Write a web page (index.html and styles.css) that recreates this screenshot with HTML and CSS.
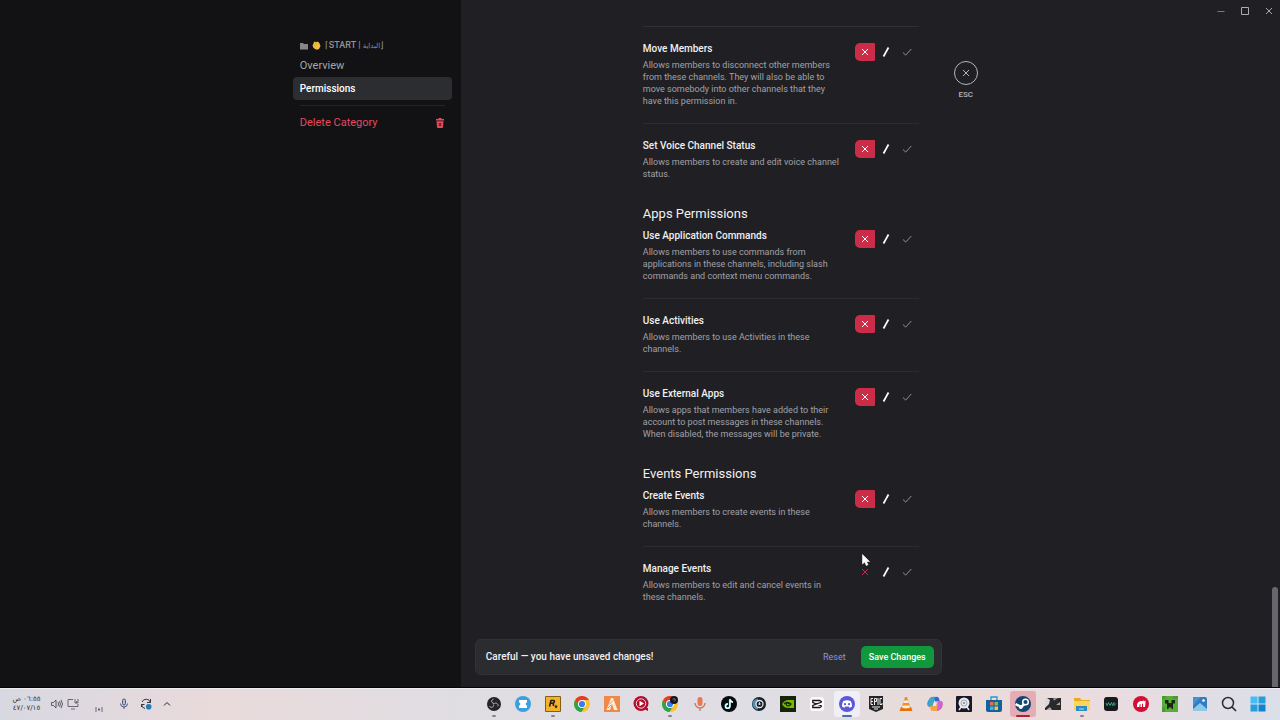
FILE: index.html
```html
<!DOCTYPE html>
<html lang="en">
<head>
<meta charset="utf-8">
<title>Category Permissions</title>
<link rel="stylesheet" href="styles.css">
<script src="app.js" defer></script>
</head>
<body>
<svg class="defs" aria-hidden="true">
  <symbol id="x" viewBox="0 0 8 8"><path d="M1 1l6 6M7 1L1 7" fill="none" stroke="currentColor"/></symbol>
  <symbol id="slash" viewBox="0 0 8 10"><path d="M1.5 9.5L6.5 .5" fill="none" stroke="currentColor" stroke-width="1.7"/></symbol>
  <symbol id="check" viewBox="0 0 10 8"><path d="M1 4.5l2.7 2.6L9.3 1" fill="none" stroke="currentColor"/></symbol>
  <symbol id="chrome" viewBox="0 0 16 16">
    <circle cx="8" cy="8" r="8" fill="#f8c22c"/>
    <path d="M1.1 4A8 8 0 0 1 15 4H8L4.5 10z" fill="#e33b2e"/>
    <path d="M1.1 4A8 8 0 0 0 7.3 16L11.4 10 4.6 10z" fill="#2ba24c"/>
    <circle cx="8" cy="8" r="4" fill="#fff"/><circle cx="8" cy="8" r="3.1" fill="#3b7de8"/>
  </symbol>
</svg>

<div class="app">
  <aside class="sidebar">
    <nav class="nav" aria-label="Category settings">
      <h2 class="nav-title">
        <svg width="8" height="8" viewBox="0 0 8 8"><path d="M0 1h3l1 1h4v5.500H0z" fill="#85858b"/></svg>
        <svg width="9" height="9" viewBox="0 0 9 9"><path d="M2 1l1-.6 1 1 1-1 1 .7 1 .4.7 1.500L8.500 5 7 8 4.500 8.700 1.500 7 .5 4.500 1.300 3z" fill="#f0bd42"/><path d="M3 2l2 2M1.800 3.800l2 2" stroke="#c98a26" stroke-width=".5"/></svg>
        <span>⌈START | <bdi lang="ar">البداية</bdi>⌋</span>
      </h2>
      <a class="nav-item" href="#overview">Overview</a>
      <a class="nav-item active" href="#permissions" aria-current="page">Permissions</a>
      <hr class="nav-line">
      <button class="nav-item danger" type="button">Delete Category
        <svg width="10" height="10" viewBox="0 0 10 10"><path d="M3.500 0h3v1H9v1.500H1V1h2.500zM1.500 3.300h7L8 9a1 1 0 0 1-1 1H3a1 1 0 0 1-1-1z" fill="currentColor"/><path d="M3.800 5l2.400 3M6.200 5L3.800 8" stroke="#17171a" stroke-width=".8"/></svg>
      </button>
    </nav>
  </aside>

  <main class="main">
    <div class="window-buttons">
      <button class="minimize" type="button" aria-label="Minimize"><svg width="8" height="8" viewBox="0 0 8 8"><path d="M.5 4.500h7" stroke="currentColor"/></svg></button>
      <button type="button" aria-label="Maximize"><svg width="8" height="8" viewBox="0 0 8 8"><path d="M.5 .5h7v7h-7z" fill="none" stroke="currentColor"/></svg></button>
      <button type="button" aria-label="Close window"><svg width="8" height="8"><use href="#x"/></svg></button>
    </div>

    <div class="page">
      <form class="permissions" id="permissions">
        <section class="group" data-items="voice"></section>
        <section class="group" data-items="apps"><h2 class="group-title">Apps Permissions</h2></section>
        <section class="group" data-items="events"><h2 class="group-title">Events Permissions</h2></section>
      </form>
      <div class="escape">
        <button class="escape-button" type="button" aria-label="Close settings"><svg width="8" height="8"><use href="#x"/></svg></button>
        <span>ESC</span>
      </div>
    </div>

    <div class="notice">
      <p>Careful — you have unsaved changes!</p>
      <button class="reset" type="reset" form="permissions">Reset</button>
      <button class="save" type="submit" form="permissions">Save Changes</button>
    </div>
    <div class="scroll-thumb"></div>
    <svg class="cursor" width="8" height="12" viewBox="0 0 8 12" aria-hidden="true"><path d="M.5 .5v9.500l2.200-2 1.600 3.500 1.700-.8L4.500 7.500h3z" fill="#fff" stroke="#fff" stroke-width=".6"/></svg>
  </main>
</div>

<footer class="taskbar">
  <div class="tray">
    <time class="clock" lang="ar"><span>٠٦:٥٥ ص</span><span dir="ltr">٤٧/٠٧/١٥</span></time>
    <svg class="sound" width="12" height="12" viewBox="0 0 12 12" fill="none" stroke="#3a3c48" stroke-width=".8"><path d="M.5 4.500h2L5 2v8L2.500 7.500h-2zM7 4q1 2 0 4M8.500 3q2 3 0 6M10 1.800q3 4.200 0 8.400"/></svg>
    <svg class="screen" width="12" height="12" viewBox="0 0 12 12" fill="none" stroke="#4b4d59" stroke-width=".8"><path d="M6 1.500H1v7h10V6M4 11h4M8 1v4h3V1M9.500 3v2"/></svg>
    <svg class="signal" width="8" height="8" viewBox="0 0 8 8" fill="none" stroke="#4b4d59" stroke-width=".8"><path d="M1 2v5M7 2v5M4 3v3M3 4.500h2"/></svg>
    <svg class="mic" width="10" height="12" viewBox="0 0 10 12" fill="none" stroke="#48567b"><rect x="3.500" y="1" width="3" height="6" rx="1.500" fill="#b9bfd3"/><path d="M1.500 5.500a3.500 3.500 0 0 0 7 0M5 9v2"/></svg>
    <svg class="update" width="12" height="12" viewBox="0 0 12 12" fill="none" stroke="#333540"><path d="M10.500 4.500A4.500 4.500 0 0 0 2 4M10.500 1v3.500H7M1.500 6.500A4.500 4.500 0 0 0 5 10.500M1.500 9V6.500h3"/><circle cx="8.700" cy="8.700" r="2.800" fill="#247eb6" stroke="none"/></svg>
    <svg class="more" width="8" height="8" viewBox="0 0 8 8" fill="none" stroke="#25252c"><path d="M1 5.500l3-3 3 3"/></svg>
  </div>
  <div class="dock">
    <button class="dot" type="button" aria-label="OBS"><svg viewBox="0 0 16 16"><circle cx="8" cy="8" r="7" fill="#242326"/><g fill="none" stroke="#c4c4c9" stroke-width=".9"><path d="M8 7.500C5 7 5 3.500 7.500 3.200M8.300 7.700c2-1.700 4.500.5 3.600 2.700M7.500 8.500c.6 3-2.500 3.800-4 1.700"/></g></svg></button>
    <button type="button" aria-label="Timer"><svg viewBox="0 0 16 16"><circle cx="8" cy="8" r="8" fill="#3ba0df"/><path d="M4 4h8v2L10.500 8 12 10v2H4v-2L5.500 8 4 6z" fill="#fff"/></svg></button>
    <button class="dot" type="button" aria-label="Rockstar Games"><svg viewBox="0 0 16 16"><rect width="16" height="16" rx="1" fill="#806016"/><rect x="1" y="1" width="14" height="14" fill="#f3b229"/><path d="M4.500 10.500L6 4.500h2.500q2 .3 0 2.800H6M8.300 7.500l.2 2.500" fill="none" stroke="#251e14" stroke-width="1.600"/><path d="M11 8.500l.5 1.300 1.400.1-1 .9.300 1.400-1.200-.8-1.200.8.400-1.400-1.100-.9 1.400-.1z" fill="#251e14"/></svg></button>
    <button type="button" aria-label="Chrome"><svg><use href="#chrome"/></svg></button>
    <button type="button" aria-label="FiveM"><svg viewBox="0 0 16 16"><rect width="16" height="16" fill="#ef8948"/><path d="M7 2h2l4.500 12H10L8 7.500 6 14H2.500z" fill="#fff0df"/><path d="M5 8.500l4-4M4 12l3-3" stroke="#ef8948"/></svg></button>
    <button type="button" aria-label="Video player"><svg viewBox="0 0 16 16"><circle cx="8" cy="7.500" r="7.500" fill="#b30d2e"/><path d="M10 12h5v3l-2-1z" fill="#b30d2e"/><circle cx="8" cy="7.500" r="4.700" fill="#b30d2e" stroke="#f3dbe0"/><path d="M6.500 4.800v5.400L11 7.500z" fill="#fff"/></svg></button>
    <button class="dot" type="button" aria-label="Chrome profile"><svg viewBox="0 0 16 16"><use href="#chrome" width="16" height="16"/><circle cx="12" cy="4" r="4" fill="#17171b"/><path d="M10.500 3.500l2-1 1 1.500-1.500 1.500" fill="none" stroke="#999" stroke-width=".8"/></svg></button>
    <button type="button" aria-label="Voice recorder"><svg viewBox="0 0 16 16"><rect x="5.500" y="1" width="5" height="9" rx="2.500" fill="#e9774f"/><path d="M3 7a5 5 0 0 0 10 0M8 12v3" fill="none" stroke="#c77562" stroke-width="1.300"/></svg></button>
    <button type="button" aria-label="TikTok"><svg viewBox="0 0 16 16"><circle cx="8" cy="8" r="8" fill="#08090c"/><path d="M8.700 3v7.200a2.200 2.200 0 1 1-2-2.400M8.700 3q.5 2.700 3 3" fill="none" stroke="#27d2d5" stroke-width="1.700"/><path d="M9 3.400v7a2.200 2.200 0 1 1-2-2.400M9 3.400q.5 2.500 3 2.800" fill="none" stroke="#fff" stroke-width="1.400"/></svg></button>
    <button type="button" aria-label="Launcher"><svg viewBox="0 0 16 16"><circle cx="8" cy="8" r="7" fill="#18212a"/><path d="M7 2.500v11A5.500 5.500 0 0 1 7 2.500" fill="#4b91b7"/><circle cx="8.500" cy="8" r="3.500" fill="#17181d" stroke="#e8e8ed" stroke-width="1.300"/><path d="M8.500 6v3M7 8h3" stroke="#eee" stroke-width=".8"/></svg></button>
    <button type="button" aria-label="NVIDIA"><svg viewBox="0 0 16 16"><rect width="16" height="16" fill="#17230d"/><path d="M2 8q3-4 6-4h6v8H8q-4 0-6-4" fill="#75b900"/><path d="M4 8q3-3.500 7 0-3.500 4-5 0 1.500-2 3 0" fill="none" stroke="#17230d" stroke-width="1.200"/></svg></button>
    <button type="button" aria-label="CapCut"><svg viewBox="0 0 16 16"><rect x="1" y="1" width="14" height="14" rx="3" fill="#faf9fa"/><path d="M12.800 6L10.800 4.500H3.800V6.500l9 3.500M12.800 10L10.800 11.500H3.800V9.500l9-3.500" fill="none" stroke="#16161a" stroke-width="1.300"/></svg></button>
    <button class="current" type="button" aria-label="Discord"><svg viewBox="0 0 16 16"><circle cx="8" cy="8" r="8" fill="#5b58dc"/><path d="M4.300 5Q8 3.500 11.700 5q1.600 3 1.300 5.800l-2.500 1L9.700 10.500H6.300l-.8 1.300-2.500-1Q2.700 8 4.300 5" fill="#fff"/><circle cx="6" cy="8.200" r="1.100" fill="#5b58dc"/><circle cx="10" cy="8.200" r="1.100" fill="#5b58dc"/></svg></button>
    <button type="button" aria-label="Epic Games"><svg viewBox="0 0 16 16"><path d="M1 0h14v13l-7 3-7-3z" fill="#242427"/><path d="M5 2.500H3v6h2M3 5.500h2M6.500 9V2.500h2v3h-2M10 2v7M14 2.500h-2v6h2V7M4 11h8M6 13h4" fill="none" stroke="#eee"/></svg></button>
    <button type="button" aria-label="VLC"><svg viewBox="0 0 16 16"><path d="M3 11h10l1.500 4h-13z" fill="#e5700c"/><path d="M7 1h2l3.500 11q-4.500 2-9 0z" fill="#f28e22"/><path d="M6 4.500h4l.8 2.500H5.200zM4.500 9.500h7l.6 2q-4 1.500-8.200 0z" fill="#f1ece9"/></svg></button>
    <button type="button" aria-label="Copilot"><svg viewBox="0 0 16 16"><path d="M3 2q2-2 6-1L7 6l-2 5H2Q-1 9 1 5z" fill="#1c9ce4"/><path d="M8 1q4-1 4.500 4H15q2 4-1 8l-3 2H7l2-8z" fill="#d659aa"/><path d="M3 10h5l2-5h4q2 1 1 4l-3 2-2 4H6q-3 0-3-5" fill="#f5a146"/><path d="M11 5h3.500q1.500 1 .5 4l-2 4-3 1z" fill="#c967d6"/><path d="M8 1h2q2 0 2.500 4H10L8 9z" fill="#3f5fd2"/><path d="M3 2L7 1 5 10H1z" fill="#48a8b8"/><path d="M7 5.500h3L9 10H6z" fill="#f3ddea"/></svg></button>
    <button type="button" aria-label="Game"><svg viewBox="0 0 16 16"><rect width="16" height="16" rx="1" fill="#161827"/><circle cx="8" cy="7" r="5.500" fill="#e7e9ed"/><path d="M3 14l2-3h6l2 3" fill="none" stroke="#e7e9ed" stroke-width="1.500"/><circle cx="8" cy="7" r="3" fill="none" stroke="#9397a3" stroke-width=".8"/><circle cx="8" cy="7" r="1" fill="#777c8c"/></svg></button>
    <button type="button" aria-label="Microsoft Store"><svg viewBox="0 0 16 16"><path d="M5 4V1h6v3" fill="none" stroke="#2997d2" stroke-width="1.300"/><path d="M0 4h16v10q0 2-2 2H2q-2 0-2-2z" fill="#185f9f"/><path d="M4 6h3.500v3.500H4z" fill="#ef684a"/><path d="M8.500 6H12v3.500H8.500z" fill="#80be3b"/><path d="M4 10.500h3.500V14H4z" fill="#36b9ec"/><path d="M8.500 10.500H12V14H8.500z" fill="#f6c43e"/></svg></button>
    <button class="alert" type="button" aria-label="Steam"><svg viewBox="0 0 16 16"><circle cx="8" cy="8" r="8" fill="#14476f"/><path d="M.5 8l5 2.500M6 11l4-3.500" stroke="#fff" stroke-width="2.500"/><circle cx="10.500" cy="6" r="2.800" fill="#14476f" stroke="#fff" stroke-width="1.500"/><circle cx="5.800" cy="11" r="2" fill="#fff"/></svg></button>
    <button type="button" aria-label="Game launcher"><svg viewBox="0 0 16 16"><path d="M0 2h16v12H0z" fill="#29292c"/><path d="M0 2h2l3 2-1 4-4 4z" fill="#dad9da"/><path d="M8 2.500l5-.5-4 2.500zM1 14l4-3 2 3zM11 9l4-3v3z" fill="#aaa9ac"/></svg></button>
    <button class="dot" type="button" aria-label="File Explorer"><svg viewBox="0 0 16 16"><path d="M0 2h6l1.500 2H16v10H0z" fill="#e8ac23"/><path d="M0 5h16v9H0z" fill="#fad45d"/><path d="M2 10h11v5H2z" fill="#2c8bc5"/><path d="M5 13h5" stroke="#b3ddf1"/></svg></button>
    <button type="button" aria-label="Monitor"><svg viewBox="0 0 16 16"><rect x="1" y="1" width="14" height="14" rx="3" fill="#161b1d"/><path d="M3 7l1 2.500 1.500-3L7 9.500l1.500-3 1 3L11 6.500v3l2-2" fill="none" stroke="#35ad91" stroke-width=".9"/></svg></button>
    <button type="button" aria-label="Music app"><svg viewBox="0 0 16 16"><circle cx="8" cy="8" r="8" fill="#d30d35"/><path d="M4 11V8l1.500-2 2-1h2l1-1v1.500l2-1V7l-.5 4h-2V7.500L9 8v3H7.500V8l-1 .5V11z" fill="#fff"/></svg></button>
    <button type="button" aria-label="Minecraft"><svg viewBox="0 0 16 16"><path fill="#58ac38" d="M0 0h16v16H0z"/><path d="M0 0h4v3H0zM11 0h5v3h-5zM0 11h3v5H0z" fill="#4b9a32"/><path d="M3 4h3.500v3h3V4H13v3.500h-2V13H9.500v-1.500h-3V13H5V7.500H3z" fill="#172714"/></svg></button>
    <button type="button" aria-label="Photos"><svg viewBox="0 0 16 16"><rect x="1" y="1" width="14" height="14" rx="2" fill="#317dbf"/><path d="M1 13l7-6 7 6v2H1z" fill="#8fc7eb"/><path d="M1 1h8L1 10z" fill="#3f93d0"/><circle cx="11.500" cy="4.500" r="1.300" fill="#fff"/></svg></button>
    <button type="button" aria-label="Search"><svg viewBox="0 0 16 16"><circle cx="7" cy="7" r="5.500" fill="none" stroke="#2b2c33" stroke-width="1.500"/><path d="M11 11l4 4" stroke="#2b2c33" stroke-width="1.700"/></svg></button>
    <button type="button" aria-label="Start"><svg viewBox="0 0 16 16"><path d="M.5 .5h7v7h-7z" fill="#45bdf0"/><path d="M8.500 .5h7v7h-7zM.5 8.500h7v7h-7z" fill="#239fdd"/><path d="M8.500 8.500h7v7h-7z" fill="#0f83cf"/></svg></button>
  </div>
</footer>
</body>
</html>
```
FILE: app.js
```javascript
const permissions = {
  voice: [
    ["Move Members", "Allows members to disconnect other members from these channels. They will also be able to move somebody into other channels that they have this permission in.", "deny"],
    ["Set Voice Channel Status", "Allows members to create and edit voice channel status.", "deny"]
  ],
  apps: [
    ["Use Application Commands", "Allows members to use commands from applications in these channels, including slash commands and context menu commands.", "deny"],
    ["Use Activities", "Allows members to use Activities in these channels.", "deny"],
    ["Use External Apps", "Allows apps that members have added to their account to post messages in these channels. When disabled, the messages will be private.", "deny"]
  ],
  events: [
    ["Create Events", "Allows members to create events in these channels.", "deny"],
    ["Manage Events", "Allows members to edit and cancel events in these channels.", "inherit"]
  ]
};

const choices = [["deny", "x", 8, 8], ["inherit", "slash", 8, 10], ["allow", "check", 10, 8]];

for (const group of document.querySelectorAll(".group")) {
  for (const [name, text, value] of permissions[group.dataset.items]) {
    const options = choices.map(([choice, icon, w, h]) =>
      `<label class="choice ${choice}"><input type="radio" name="${name}" value="${choice}" aria-label="${name}: ${choice}"${choice === value ? " checked" : ""}><svg width="${w}" height="${h}"><use href="#${icon}"/></svg></label>`
    ).join("");
    group.insertAdjacentHTML("beforeend",
      `<div class="item"><div class="item-text"><h3>${name}</h3><p>${text}</p></div><div class="choices" role="radiogroup" aria-label="${name}">${options}</div></div>`);
  }
}
```
FILE: styles.css
```css
* { box-sizing: border-box; }
body {
  margin: 0;
  height: 100vh;
  display: flex;
  flex-direction: column;
  overflow: hidden;
  background: #202024;
  color: #f0f0f2;
  font: 10px/14px Roboto, "Noto Sans", sans-serif;
}
h2, h3, p { margin: 0; }
button { border: 0; padding: 0; background: none; color: inherit; font: inherit; }
svg { display: block; flex: none; }
.defs { position: absolute; width: 0; height: 0; }

.app { flex: 1; min-height: 0; display: grid; grid-template-columns: 36% 1fr; border-bottom: 1px solid #050506; }
.sidebar { background: #121214; display: flex; justify-content: flex-end; padding: 37px 9px 0 0; }
.nav { width: 159px; display: flex; flex-direction: column; }
.nav-title { display: flex; align-items: center; gap: 4px; padding-left: 7px; height: 17px; color: #929298; font-size: 9px; font-weight: 500; white-space: nowrap; }
.nav-title bdi { font-family: "DejaVu Sans", sans-serif; font-weight: 400; font-size: 7px; }
.nav-item { display: flex; align-items: center; justify-content: space-between; height: 23px; padding: 0 7px; border-radius: 4px; color: #a5a5ab; text-decoration: none; font-size: 11px; }
.nav-item.active { background: #2c2d31; color: #fff; font-size: 10px; font-weight: 500; }
.nav-line { width: 145px; height: 1px; margin: 5px 7px; border: 0; background: #242428; }
.danger { color: #e5495b; }

.main { position: relative; min-height: 0; overflow: hidden; display: flex; flex-direction: column; background: #202024; }
.window-buttons { position: absolute; top: 7px; right: 7px; display: flex; gap: 16px; color: #aaaab0; }
.minimize { color: #77777d; }
.page { flex: 1; min-height: 0; display: flex; align-items: flex-start; gap: 35px; padding: 26px 0 0 182px; }
.permissions { width: 276px; border-top: 1px solid #303035; }
.group-title { margin: 24px 0 5px; font-size: 13px; line-height: 20px; font-weight: 400; }
.item { display: flex; justify-content: space-between; }
.item + .item { margin-top: 16px; padding-top: 15px; border-top: 1px solid #2b2b30; }
.group:first-child .item:first-child { padding-top: 15px; }
.item-text { width: 200px; }
.item h3 { font-size: 10px; line-height: 14px; font-weight: 500; }
.item p { margin-top: 3px; color: #a0a0a7; font-size: 9px; line-height: 12px; }
.choices { display: flex; gap: 1px; margin: 1px 2px 0 0; height: 18px; }
.choice { position: relative; width: 20px; display: flex; align-items: center; justify-content: center; }
.choice input { position: absolute; inset: 0; margin: 0; width: 100%; height: 100%; opacity: 0; }
.deny { color: #c32c44; border-radius: 5px 1px 1px 5px; }
.deny:has(:checked) { background: #cb2d48; color: #fff; }
.inherit { color: #fff; }
.allow { color: #829b88; }
.escape { margin-top: 35px; display: flex; flex-direction: column; align-items: center; gap: 3px; color: #b4b4ba; font-size: 8px; font-weight: 500; }
.escape-button { width: 24px; height: 24px; border: 1px solid #b4b4ba; border-radius: 50%; display: grid; place-items: center; }
.notice { display: flex; align-items: center; width: 57%; height: 36px; margin: 0 0 12px 14px; padding: 0 7px 0 10px; background: #2b2c30; border: 1px solid #323338; border-radius: 6px; }
.notice p { flex: 1; font-size: 10px; font-weight: 500; }
.reset { margin-right: 15px; color: #8b91ed; font-size: 9px; }
.save { height: 22px; padding: 0 8px; border-radius: 5px; background: #12983c; color: #fff; font-size: 9px; font-weight: 500; }
.scroll-thumb { position: absolute; right: 2px; bottom: 0; width: 6px; height: 100px; border-radius: 3px 3px 0 0; background: #66666d; }
.cursor { position: absolute; left: 401px; top: 554px; }

.taskbar { height: 32px; display: flex; justify-content: space-between; padding-bottom: 1px; background: linear-gradient(90deg, #d8d8e2, #e9dadb 17%, #e0dde2 35%, #dfdee4 60%, #eadbd8 75%, #ebdcde 85%, #dbdfe9); border-top: 1px solid #ececf0; }
.tray { display: flex; align-items: center; padding-left: 12px; }
.clock { width: 29px; display: flex; flex-direction: column; align-items: center; direction: rtl; font: 7px/9px "DejaVu Sans", sans-serif; color: #33343e; white-space: nowrap; }
.sound { margin-left: 10px; }
.screen { margin-left: 4px; }
.signal { margin: 10px 0 0 16px; }
.mic { margin-left: 16px; }
.update { margin-left: 11px; }
.more { margin-left: 11px; }
.dock { width: 62%; margin-right: 7px; display: grid; grid-template-columns: repeat(27, 1fr); }
.dock button { position: relative; display: grid; place-items: center; }
.dock svg { width: 16px; height: 16px; }
.dock .current, .dock .alert { margin: 2px; border-radius: 3px; background: #f0eff5; }
.dock .alert { background: #e6acb6; }
.dock button::after { position: absolute; bottom: 2px; left: 50%; width: 4px; height: 2px; margin-left: -2px; border-radius: 1px; }
.dock .dot::after { content: ""; background: #85858c; }
.dock .current::after, .dock .alert::after { content: ""; bottom: 0; width: 10px; margin-left: -5px; background: #426dba; }
.dock .alert::after { width: 14px; margin-left: -7px; background: #a82333; }
```
